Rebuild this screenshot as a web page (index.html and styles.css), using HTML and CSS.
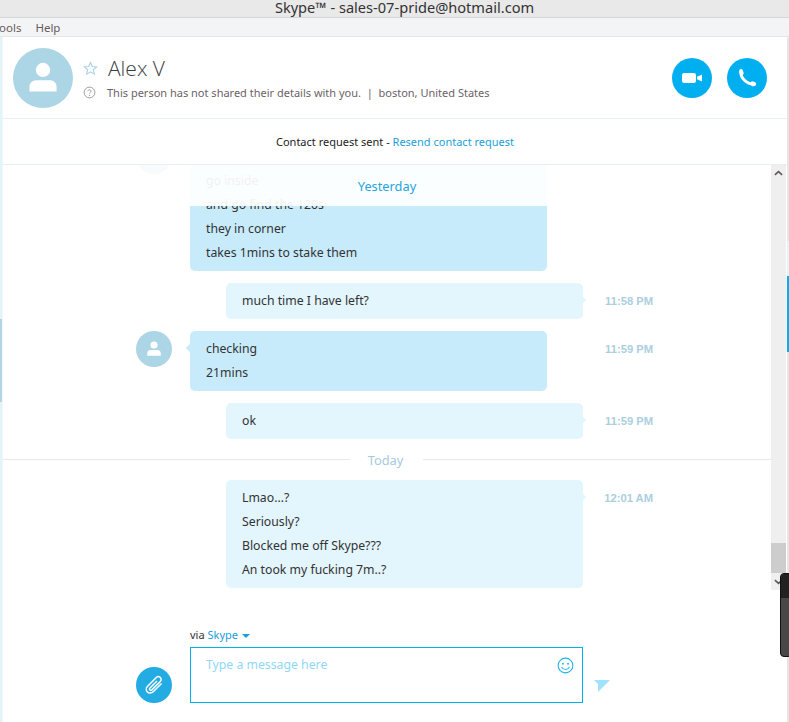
FILE: index.html
```html
<!DOCTYPE html>
<html>
<head>
    <meta charset="utf-8">
    <link rel="stylesheet" href="styles.css">
</head>
<body>
    <div class="titlebar">Skype™ - sales-07-pride@hotmail.com</div>
    <div class="menubar">
        <span class="menu-cut">ools</span>
        <span>Help</span>
    </div>

    <div class="window">
        <div class="left-strip">
            <div class="strip-active"></div>
        </div>

        <div class="main">
            <!-- Contact header -->
            <div class="header">
                <div class="avatar-large">
                    <svg viewBox="0 0 24 24" width="44" height="44"><circle cx="12" cy="7.6" r="3.9" fill="#fff"/><path d="M4.6 19.4v-2.6c0-2.300 1.700-3.600 3.900-3.600h7c2.200 0 3.900 1.300 3.900 3.600v2.600z" fill="#fff"/></svg>
                </div>
                <div class="contact">
                    <div class="contact-name">
                        <svg class="star" viewBox="0 0 16 16" width="15" height="15"><path d="M8 1.600l1.900 4.300 4.700.4-3.600 3.100 1.100 4.600L8 11.600 3.900 14l1.100-4.600-3.600-3.100 4.700-.4z" fill="none" stroke="#a9d2e4" stroke-width="1.200"/></svg>
                        <span>Alex V</span>
                    </div>
                    <div class="contact-info">
                        <svg class="help-icon" viewBox="0 0 14 14" width="13" height="13"><circle cx="7" cy="7" r="5.800" fill="none" stroke="#949494"/><path d="M5.300 5.600c0-1 .8-1.600 1.700-1.600s1.700.6 1.700 1.500c0 1.200-1.700 1.300-1.700 2.600" fill="none" stroke="#949494"/><circle cx="7" cy="10" r=".7" fill="#949494"/></svg>
                        <span>This person has not shared their details with you. &nbsp;|&nbsp; boston, United States</span>
                    </div>
                </div>
                <div class="call-btn">
                    <svg viewBox="0 0 20 14" width="20" height="14"><rect x="0" y="2" width="14" height="10" rx="2.200" fill="#fff"/><path d="M15 5.800l5-2.300v7l-5-2.300z" fill="#fff"/></svg>
                </div>
                <div class="call-btn">
                    <svg viewBox="0 0 20 20" width="20" height="20"><path d="M3.600 3.200C3.600 10.200 9.600 16 16.600 16.200" fill="none" stroke="#fff" stroke-width="3"/><path d="M2.200 3.200C2.200 1.800 3 1 4 1s1.600.6 1.900 1.500l.7 2.300c.2.800 0 1.300-.5 1.700L4 7.500zM13 15.600l1-1.700c.4-.6 1-.8 1.700-.6l2 .7c.9.300 1.300 1 1.300 1.900 0 1.300-.9 2.300-2.300 2.300H15z" fill="#fff"/></svg>
                </div>
            </div>

            <div class="notice">
                Contact request sent - <a class="link" href="#">Resend contact request</a>
            </div>

            <!-- Conversation -->
            <div class="chat">
                <div class="messages">
                    <div class="msg msg-first">
                        <div class="bubble theirs">
                            <p>go inside</p>
                            <p>and go find the 120s</p>
                            <p>they in corner</p>
                            <p>takes 1mins to stake them</p>
                        </div>
                    </div>

                    <div class="msg">
                        <div class="bubble mine">
                            <p>much time I have left?</p>
                        </div>
                        <div class="time">11:58 PM</div>
                    </div>

                    <div class="msg">
                        <div class="avatar-small">
                            <svg viewBox="0 0 24 24" width="22" height="22"><circle cx="12" cy="7.600" r="3.900" fill="#fff"/><path d="M4.600 19.400v-2.600c0-2.300 1.700-3.600 3.900-3.600h7c2.200 0 3.900 1.300 3.900 3.600v2.600z" fill="#fff"/></svg>
                        </div>
                        <div class="bubble theirs has-tail">
                            <p>checking</p>
                            <p>21mins</p>
                        </div>
                        <div class="time">11:59 PM</div>
                    </div>

                    <div class="msg">
                        <div class="bubble mine">
                            <p>ok</p>
                        </div>
                        <div class="time">11:59 PM</div>
                    </div>

                    <div class="day-sep"><span>Today</span></div>

                    <div class="msg">
                        <div class="bubble mine">
                            <p>Lmao...?</p>
                            <p>Seriously?</p>
                            <p>Blocked me off Skype???</p>
                            <p>An took my fucking 7m..?</p>
                        </div>
                        <div class="time">12:01 AM</div>
                    </div>

                    <!-- sticky date, sits over the scrolled messages -->
                    <div class="sticky-day">
                        <div class="ghost-avatar"></div>
                        <span>Yesterday</span>
                    </div>
                </div>

                <div class="scrollbar">
                    <svg class="scroll-arrow" viewBox="0 0 10 6" width="9" height="6"><path d="M1 5l4-3.500L9 5" fill="none" stroke="#5a5a5a" stroke-width="1.800"/></svg>
                    <div class="scroll-track"><div class="scroll-thumb"></div></div>
                    <svg class="scroll-arrow" viewBox="0 0 10 6" width="9" height="6"><path d="M1 1l4 3.500L9 1" fill="none" stroke="#5a5a5a" stroke-width="1.800"/></svg>
                </div>
            </div>

            <!-- Composer -->
            <div class="composer">
                <div class="via">via <a class="link" href="#">Skype</a><span class="caret"></span></div>
                <div class="composer-row">
                    <div class="attach-btn">
                        <svg viewBox="0 0 24 24" width="24" height="24"><path d="M19.500 10.500l-8.300 8.300c-1.700 1.700-4.300 1.700-5.800.2s-1.500-4.100.2-5.800l8.700-8.700c1.100-1.100 2.900-1.100 4 0s1.100 2.900 0 4l-8.400 8.400c-.6.600-1.500.6-2 .1s-.5-1.400.1-2l7-7" fill="none" stroke="#fff" stroke-width="1.500"/></svg>
                    </div>
                    <div class="input-box">
                        <span class="placeholder">Type a message here</span>
                        <svg class="smiley" viewBox="0 0 18 18" width="17" height="17"><circle cx="9" cy="9" r="7.800" fill="none" stroke="#1ab2ee" stroke-width="1.100"/><circle cx="6.300" cy="7.200" r="1" fill="#1ab2ee"/><circle cx="11.700" cy="7.200" r="1" fill="#1ab2ee"/><path d="M4.800 10.600c1 1.800 2.500 2.600 4.200 2.600s3.200-.8 4.200-2.600" fill="none" stroke="#1ab2ee" stroke-width="1.100"/></svg>
                    </div>
                    <svg class="send" viewBox="0 0 16 12" width="16" height="12"><path d="M0 0h16L4 12V4z" fill="#9fe2fb"/></svg>
                </div>
            </div>
        </div>

        <div class="right-strip">
            <div class="strip-light"></div>
            <div class="strip-blue"></div>
        </div>
    </div>

    <div class="dark-widget"><div class="dark-widget-top"></div></div>
</body>
</html>
```

FILE: styles.css
```css
html, body {
    margin: 0;
    height: 722px;
    overflow: hidden;
}

body {
    display: flex;
    flex-direction: column;
    position: relative;
    width: 789px;
    background: white;
    font-family: "Noto Sans", "Open Sans", sans-serif;
    font-size: 12.25px;
    color: #333;
}

.titlebar {
    height: 17px;
    line-height: 15px;
    padding-left: 20px;
    text-align: center;
    font-size: 14.6px;
    color: #333;
    background: #e9e9e9;
    border-bottom: 1px solid #d5d5d5;
}

.menubar {
    display: flex;
    gap: 14px;
    height: 18px;
    line-height: 20px;
    font-size: 11.5px;
    color: #6a5a60;
    background: #f3f4f6;
    border-bottom: 1px solid #e6e6e6;
}

.menu-cut {
    margin-left: -1px;
}

.window {
    flex: 1;
    display: flex;
    min-height: 0;
}

.left-strip {
    width: 2px;
    padding-top: 282px;
    background: #e4f3f8;
    border-right: 1px solid #eef7fb;
}

.strip-active {
    height: 83px;
    background: #b5d5e3;
}

.right-strip {
    width: 2px;
    padding-top: 204px;
    background: #e6e6e6;
}

.strip-light {
    height: 35px;
    background: #e4f3f8;
}

.strip-blue {
    height: 76px;
    background: #00aff0;
}

.main {
    flex: 1;
    display: flex;
    flex-direction: column;
    min-width: 0;
}

/* header */
.header {
    display: flex;
    align-items: center;
    height: 81px;
    padding: 0 20px 0 10px;
    border-bottom: 1px solid #e6eff4;
}

.avatar-large {
    display: flex;
    align-items: center;
    justify-content: center;
    width: 60px;
    height: 60px;
    border-radius: 50%;
    background: #acd5e5;
}

.contact {
    flex: 1;
    margin-left: 9px;
}

.contact-name {
    display: flex;
    align-items: center;
    gap: 10px;
    height: 26px;
    font-size: 21px;
    color: #3a3f45;
}

.star {
    margin-left: 1px;
}

.contact-name span {
    font-family: "Open Sans", sans-serif;
    font-weight: 300;
}

.contact-info {
    display: flex;
    align-items: center;
    gap: 11px;
    margin-top: 4px;
    margin-left: 1px;
    font-size: 11px;
    color: #6c6268;
}

.call-btn {
    display: flex;
    align-items: center;
    justify-content: center;
    width: 40px;
    height: 40px;
    margin-left: 15px;
    border-radius: 50%;
    background: #00aff0;
}

.notice {
    height: 45px;
    line-height: 46px;
    text-align: center;
    font-size: 11px;
    color: #222;
    border-bottom: 1px solid #e6eff4;
}

.link {
    color: #1a9fd8;
    text-decoration: none;
}

/* chat */
.chat {
    display: flex;
    height: 425px;
}

.messages {
    flex: 1;
    position: relative;
    overflow: hidden;
}

.msg {
    position: relative;
    display: flex;
    align-items: flex-start;
    margin-bottom: 12px;
}

.msg-first {
    margin-top: -2px;
}

.bubble {
    box-sizing: border-box;
    width: 357px;
    padding: 6px 16px;
    border-radius: 5px;
    color: #333;
}

.bubble p {
    margin: 0;
    line-height: 24px;
}

.theirs {
    margin-left: 187px;
    background: #c7ebfb;
}

.mine {
    margin-left: 223px;
    background: #e3f5fd;
}

.has-tail::before {
    content: '';
    position: absolute;
    left: 184px;
    top: 14px;
    width: 6px;
    height: 6px;
    transform: rotate(45deg);
    background: #c7ebfb;
}

.mine::after {
    content: '';
    position: absolute;
    left: 576px;
    top: 14px;
    width: 6px;
    height: 6px;
    transform: rotate(45deg);
    background: #e3f5fd;
}

.avatar-small {
    position: absolute;
    left: 133px;
    top: 0;
    display: flex;
    align-items: center;
    justify-content: center;
    width: 36px;
    height: 36px;
    border-radius: 50%;
    background: #acd5e5;
}

.time {
    position: absolute;
    right: 118px;
    top: 11px;
    font-family: "Liberation Sans", sans-serif;
    font-size: 11.2px;
    line-height: 14px;
    font-weight: bold;
    color: #abcfe0;
}

.day-sep {
    display: flex;
    align-items: center;
    height: 16px;
    margin: 12px 0 13px;
    color: #a5c9dc;
    font-size: 12.8px;
}

.day-sep::before,
.day-sep::after {
    content: '';
    height: 1px;
    background: #e8e8e8;
}

.day-sep::before {
    width: 347px;
}

.day-sep::after {
    flex: 1;
}

.day-sep span {
    width: 71px;
    margin-top: 2px;
    padding-right: 2px;
    text-align: center;
}

.sticky-day {
    position: absolute;
    left: 0;
    right: 0;
    top: 0;
    height: 41px;
    line-height: 43px;
    text-align: center;
    font-size: 12.8px;
    color: #27a5d9;
    background: rgba(255, 255, 255, 0.93);
}

.sticky-day span {
    position: relative;
}

.ghost-avatar {
    position: absolute;
    left: 133px;
    top: -27px;
    width: 36px;
    height: 36px;
    border-radius: 50%;
    background: #acd5e5;
    opacity: 0.1;
}

/* scrollbar */
.scrollbar {
    display: flex;
    flex-direction: column;
    align-items: center;
    width: 15px;
    margin-right: 1px;
    background: #efefef;
}

.scroll-arrow {
    flex: none;
    margin: 5px 0;
}

.scroll-track {
    flex: 1;
    align-self: stretch;
    padding-top: 362px;
}

.scroll-thumb {
    height: 30px;
    background: #cdcdcd;
}

/* composer */
.composer {
    flex: 1;
    padding-top: 36px;
}

.via {
    height: 21px;
    margin-left: 187px;
    font-size: 11px;
    line-height: 18px;
}

.caret {
    display: inline-block;
    margin-left: 4px;
    vertical-align: 1px;
    border-top: 4px solid #1a9fd8;
    border-left: 4px solid transparent;
    border-right: 4px solid transparent;
}

.composer-row {
    display: flex;
    align-items: flex-end;
    margin-left: 133px;
}

.attach-btn {
    display: flex;
    align-items: center;
    justify-content: center;
    width: 36px;
    height: 36px;
    margin-right: 18px;
    border-radius: 50%;
    background: #23ace3;
}

.input-box {
    position: relative;
    box-sizing: border-box;
    width: 393px;
    height: 56px;
    padding: 8px 15px;
    border: 1px solid #00aff0;
}

.placeholder {
    color: #8fd8f7;
}

.smiley {
    position: absolute;
    right: 8px;
    top: 9px;
}

.send {
    margin: 0 0 11px 11px;
}

.dark-widget {
    position: absolute;
    left: 780px;
    top: 573px;
    box-sizing: border-box;
    width: 12px;
    height: 84px;
    background: #484848;
    border: 1px solid #111;
    border-radius: 4px;
}

.dark-widget-top {
    height: 24px;
    background: #222;
    border-radius: 4px 0 0 0;
}
```
